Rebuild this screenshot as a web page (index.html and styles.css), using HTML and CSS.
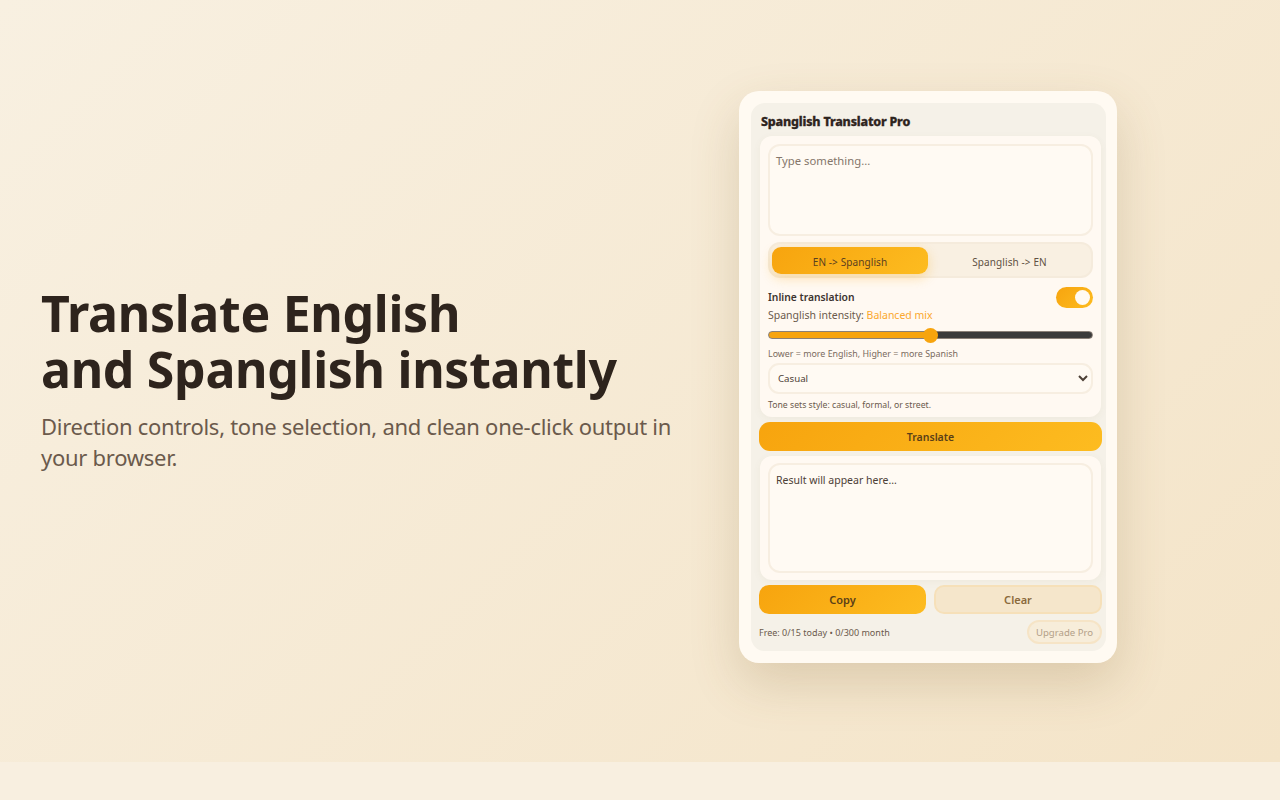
FILE: index.html
```html
<!DOCTYPE html>
<html lang="en">
<head>
<meta charset="utf-8">
<title>Spanglish Translator Pro</title>
<link rel="stylesheet" href="styles.css">
</head>
<body>
<main class="hero">
  <section class="intro">
    <h1>Translate English<br>and Spanglish instantly</h1>
    <p>Direction controls, tone selection, and clean one-click output in your browser.</p>
  </section>
  <section class="frame">
    <div class="panel">
      <h2>Spanglish Translator Pro</h2>
      <div class="card input-card">
        <textarea class="field source" placeholder="Type something..."></textarea>
        <div class="segments">
          <button class="segment active">EN -&gt; Spanglish</button>
          <button class="segment">Spanglish -&gt; EN</button>
        </div>
        <div class="inline-row">
          <span>Inline translation</span>
          <span class="switch"><span class="knob"></span></span>
        </div>
        <div class="intensity">Spanglish intensity: <span class="accent">Balanced mix</span></div>
        <input class="slider" type="range" min="0" max="100" value="50">
        <div class="hint">Lower = more English, Higher = more Spanish</div>
        <select class="tone"><option>Casual</option></select>
        <div class="hint tone-hint">Tone sets style: casual, formal, or street.</div>
      </div>
      <button class="primary translate">Translate</button>
      <div class="card output-card">
        <textarea class="field result">Result will appear here...</textarea>
      </div>
      <div class="actions">
        <button class="primary copy">Copy</button>
        <button class="clear">Clear</button>
      </div>
      <div class="footer">
        <span>Free: 0/15 today • 0/300 month</span>
        <button class="upgrade">Upgrade Pro</button>
      </div>
    </div>
  </section>
</main>
<div class="strip"></div>
</body>
</html>
```
FILE: styles.css
```css
* { box-sizing: border-box; }
html, body { margin: 0; height: 800px; overflow: hidden; }
body { background: #f8efe0; font-family: "Noto Sans", "Open Sans", sans-serif; color: #2e241d; }
.hero {
  height: 762px;
  display: flex;
  align-items: center;
  justify-content: space-between;
  padding: 0 163px 0 41px;
  background: linear-gradient(135deg, #f8f0e1 0%, #f4e4c8 100%);
}
.intro { width: 640px; margin-top: -4px; }
h1 { margin: 0; font-size: 50px; line-height: 56px; font-weight: 700; color: #2e241d; letter-spacing: -0.3px; }
.intro p { margin: 14px 0 0; font-size: 22px; line-height: 31px; color: #6b5a4c; letter-spacing: -0.28px; }
.frame {
  width: 378px;
  height: 572px;
  flex: none;
  margin-bottom: 8px;
  padding: 12px 11px 12px 12px;
  background: #fffaf2;
  border-radius: 20px;
  box-shadow: 0 20px 50px rgba(120, 90, 40, 0.2);
}
.panel {
  height: 548px;
  padding: 9px 4px 0 8px;
  background: #f5f1e8;
  border-radius: 14px;
  display: flex;
  flex-direction: column;
}
h2 { margin: 0 0 0 2px; font-size: 12.5px; line-height: 20px; font-weight: 800; color: #2e241d; letter-spacing: -0.2px; -webkit-text-stroke: 0.3px #2e241d; }
.card { background: #fff9f2; border-radius: 12px; padding: 8px; box-shadow: 0 2px 8px rgba(120, 90, 40, 0.05); }
.input-card { margin: 4px 1px 0 1px; height: 281px; }
.field {
  display: block;
  width: 100%;
  resize: none;
  outline: none;
  background: #fffaf3;
  border: 2px solid #f7eee1;
  border-radius: 12px;
  padding: 7px 6px;
  font: 11.3px/16px "Noto Sans", sans-serif;
  color: #4d4036;
}
.source { height: 92px; }
.source::placeholder { color: #85766a; opacity: 1; }
.segments {
  height: 36px;
  margin-top: 6px;
  padding: 3px 0 2px 2px;
  display: flex;
  background: #f9f0e2;
  border: 2px solid #f5ebdc;
  border-radius: 12px;
}
.segment {
  flex: 1;
  border: 0;
  padding: 2px 0 0;
  border-radius: 9px;
  background: transparent;
  font: 10px "Noto Sans", sans-serif;
  letter-spacing: 0.1px;
  color: #5f5043;
}
.segment.active {
  flex: 0 0 156px;
  background: linear-gradient(135deg, #f7a40e, #fdbc20);
  box-shadow: 0 4px 12px rgba(247, 164, 14, 0.3);
  color: #5a4020;
}
.inline-row { display: flex; justify-content: space-between; align-items: center; height: 22px; margin-top: 8px; font-size: 10.3px; font-weight: 600; color: #3d3430; }
.switch { width: 37px; height: 21px; border-radius: 11px; background: linear-gradient(135deg, #f7a40e, #fdbc20); padding: 3px 3px 3px 19px; }
.knob { display: block; width: 15px; height: 15px; border-radius: 50%; background: #fffaf2; }
.intensity { font-size: 10.5px; line-height: 15px; margin-top: 0; color: #6b5a4c; }
.accent { color: #fba82d; }
.slider {
  display: block;
  width: 100%;
  height: 14px;
  margin: 5px 0 0;
  appearance: none;
  -webkit-appearance: none;
  background: transparent;
}
.slider::-webkit-slider-runnable-track {
  height: 8px;
  border: 1px solid #8a8078;
  border-radius: 4px;
  background: linear-gradient(90deg, #f7a40e 50%, #3b3b3b 50%);
}
.slider::-webkit-slider-thumb {
  -webkit-appearance: none;
  width: 15px;
  height: 15px;
  margin-top: -4.5px;
  border-radius: 50%;
  background: #f7a40e;
}
.hint { font-size: 8.9px; line-height: 12px; margin-top: 6px; color: #7a6b5e; }
.tone {
  display: block;
  width: 100%;
  height: 31px;
  margin-top: 3px;
  padding: 0 4px;
  background: #fffaf3;
  border: 2px solid #f7eee1;
  border-radius: 11px;
  font: 9.7px "Noto Sans", sans-serif;
  color: #4d4036;
}
.tone-hint { font-size: 8.7px; margin-top: 5px; color: #6b5a4c; }
.primary {
  border: 0;
  background: linear-gradient(135deg, #f7a40e, #fdbc20);
  font-family: "Noto Sans", sans-serif;
  font-weight: 600;
  color: #5a3f18;
}
.translate { height: 29px; margin-top: 5px; border-radius: 11px; font-size: 10.5px; }
.output-card { margin: 5px 1px 0; height: 124px; padding: 7px 8px; }
.result { height: 110px; font-size: 10.5px; }
.actions { display: flex; gap: 8px; margin-top: 5px; }
.copy, .clear { height: 29px; border-radius: 10px; font-size: 11px; }
.copy { flex: 0 0 167px; }
.clear {
  flex: 1;
  border: 2px solid #f6e0b9;
  background: #f5e6cb;
  font-family: "Noto Sans", sans-serif;
  font-weight: 600;
  color: #8a6a3c;
}
.footer { display: flex; justify-content: space-between; align-items: center; margin-top: 6px; font-size: 9px; color: #6b5a4c; }
.upgrade {
  height: 24px;
  width: 75px;
  padding: 0;
  border: 2px solid #f6e4c6;
  border-radius: 12px;
  background: #f7edda;
  font: 9.6px "Noto Sans", sans-serif;
  color: #b3a088;
}
.strip { height: 38px; background: #f8efe0; }
```
